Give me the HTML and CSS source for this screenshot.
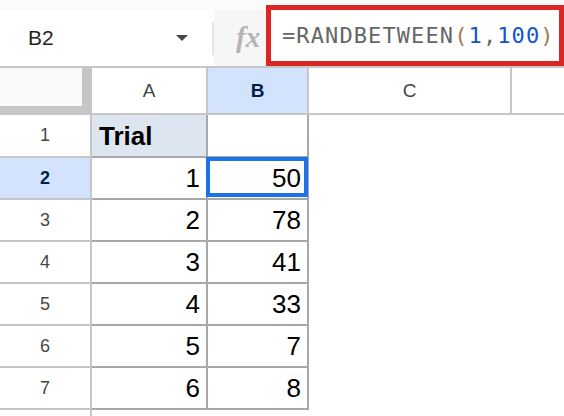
FILE: index.html
```html
<!DOCTYPE html>
<html>
<head>
  <title>RANDBETWEEN</title>
  <meta charset=utf-8>
  <meta name=viewport content="width=device-width, initial-scale=1">
  <link rel="stylesheet" href="styles.css">
</head>
<body>
<div class="toolbar">
  <div class="namebox">
    <span class="ref">B2</span>
    <span class="caret"></span>
    <span class="sep"></span>
  </div>
  <div class="fx">fx</div>
  <div class="formula">=RANDBETWEEN<span class="paren">(</span><span class="num">1</span>,<span class="num">100</span><span class="paren">)</span></div>
</div>

<div class="sheet">
  <!-- column headers -->
  <div class="corner"><div class="corner-in"></div></div>
  <div class="colhead">A</div>
  <div class="colhead sel">B</div>
  <div class="colhead">C</div>
  <div class="colhead last"></div>

  <div class="rowhead">1</div>
  <div class="cell bold left head">Trial</div>
  <div class="cell"></div>
  <div class="blank"></div><div class="blank"></div>

  <div class="rowhead sel">2</div>
  <div class="cell">1</div>
  <div class="cell active">50<span class="selection"></span></div>
  <div class="blank"></div><div class="blank"></div>

  <div class="rowhead">3</div>
  <div class="cell">2</div>
  <div class="cell">78</div>
  <div class="blank"></div><div class="blank"></div>

  <div class="rowhead">4</div>
  <div class="cell">3</div>
  <div class="cell">41</div>
  <div class="blank"></div><div class="blank"></div>

  <div class="rowhead">5</div>
  <div class="cell">4</div>
  <div class="cell">33</div>
  <div class="blank"></div><div class="blank"></div>

  <div class="rowhead">6</div>
  <div class="cell">5</div>
  <div class="cell">7</div>
  <div class="blank"></div><div class="blank"></div>

  <div class="rowhead">7</div>
  <div class="cell">6</div>
  <div class="cell">8</div>
  <div class="blank"></div><div class="blank"></div>

  <!-- row 8, only its top edge is in view -->
  <div class="rowhead end"></div>
  <div class="blank"></div><div class="blank"></div>
  <div class="blank"></div><div class="blank"></div>
</div>
</body>
</html>
```

FILE: styles.css
```css
html, body {
  margin: 0;
  padding: 0;
}
body {
  width: 564px;
  height: 416px;
  overflow: hidden;
  background: #fff;
  font-family: "Liberation Sans", Arial, sans-serif;
}

/* name box + formula bar */
.toolbar {
  display: flex;
  height: 66px;
  padding-top: 5px;
  box-sizing: border-box;
  background: #f9fbfd;
}
.namebox {
  display: flex;
  align-items: center;
  width: 214px;
  height: 56px;
  margin-top: 5px;
  background: #fff;
  color: #1f1f1f;
}
.namebox .ref {
  padding-left: 28px;
  font-size: 21px;
  flex: 1;
}
.namebox .caret {
  width: 0;
  height: 0;
  border-left: 6px solid transparent;
  border-right: 6px solid transparent;
  border-top: 6px solid #444746;
  margin-right: 24px;
}
.namebox .sep {
  width: 2px;
  height: 33px;
  background: #e3e5e8;
}
.fx {
  width: 52px;
  height: 56px;
  margin-top: 5px;
  box-sizing: border-box;
  padding-left: 22px;
  line-height: 54px;
  background: #f6f6f6;
  color: #b4b4b4;
  font-family: "Liberation Serif", serif;
  font-style: italic;
  font-weight: bold;
  font-size: 29px;
}
.formula {
  flex: 1;
  height: 61px;
  box-sizing: border-box;
  border: 5px solid #dc2626;
  background: #fff;
  padding-left: 11px;
  line-height: 52px;
  color: #666;
  font-family: "DejaVu Sans Mono", monospace;
  font-size: 22px;
  letter-spacing: 1.1px;
  white-space: nowrap;
}
.formula .num {
  color: #1155cc;
}
.formula .paren {
  color: #a07c58;
}

/* grid */
.sheet {
  display: grid;
  grid-template-columns: 92px 116px 101px 203px 1fr;
  grid-template-rows: 47px 43px repeat(6, 42px) 6px;
  border-top: 2px solid #c4c7c5;
}
.corner {
  background: #c4c7c5;
}
.corner-in {
  width: 82px;
  height: 38px;
  background: #f8f9fa;
}
.colhead {
  display: flex;
  align-items: center;
  justify-content: center;
  border-right: 2px solid #c4c7c5;
  border-bottom: 2px solid #c4c7c5;
  color: #444746;
  font-size: 19px;
}
.colhead.last {
  border-right: 0;
}
.rowhead {
  display: flex;
  align-items: center;
  justify-content: center;
  border-right: 2px solid #c4c7c5;
  border-bottom: 2px solid #c4c7c5;
  color: #444746;
  font-size: 18px;
}
.rowhead.end {
  border-bottom: 0;
}
.sel {
  background: #d3e3fd;
  color: #041e49;
  font-weight: bold;
}
.cell {
  position: relative;
  display: flex;
  align-items: flex-end;
  justify-content: flex-end;
  padding: 0 6px 7px 7px;
  border-right: 2px solid #a8a8a8;
  border-bottom: 2px solid #a8a8a8;
  color: #000;
  font-size: 26px;
  line-height: 26px;
}
.cell.left {
  justify-content: flex-start;
}
.cell.bold {
  font-weight: bold;
}
.cell.head {
  background: #dde6f0;
}
.selection {
  position: absolute;
  top: -1px;
  left: -2px;
  right: -1px;
  bottom: 1px;
  border: 4px solid #1a73e8;
}
.blank {
  background: #fff;
}
```
